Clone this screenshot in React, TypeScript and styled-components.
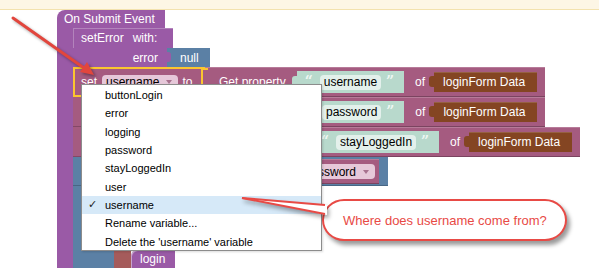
import styled, { createGlobalStyle, css } from 'styled-components';

// block colours
const PURPLE = '#9a5aa6';
const MAUVE = '#a55b80';
const BLUE = '#5b80a5';
const TEAL = '#b8d9cc';
const BROWN = '#844522';
const RED_BLOCK = '#a55b5b';
const YELLOW = '#fbc62f';
const CALLOUT = '#e84a45';

const GlobalStyle = createGlobalStyle`
	html, body {
		margin: 0;
		padding: 0;
		background: #fff;
	}
	body {
		font-family: "Liberation Sans", Arial, sans-serif;
	}
`;

// output tab on the left side of a value block
const tab = (color: string, top: number) => css`
	&::before {
		content: '';
		position: absolute;
		left: -5px;
		top: ${top}px;
		width: 5px;
		height: 11px;
		background: ${color};
		border-radius: 3px 0 0 3px;
	}
`;

const Page = styled.div`
	position: relative;
	width: 599px;
	height: 268px;
	overflow: hidden;
	background: #fff;
`;

const TopBar = styled.div`
	height: 9px;
	background: #fdf6e5;
	border-bottom: 1px solid #f3e2ae;
`;

const Workspace = styled.div`
	display: flex;
	padding-left: 57px;
`;

const EventBlock = styled.div`
	display: flex;
	flex-direction: column;
`;

const EventHeader = styled.div`
	width: 108px;
	height: 18px;
	box-sizing: border-box;
	padding: 2px 0 0 7px;
	background: ${PURPLE};
	border-top-left-radius: 8px;
	color: #fff;
	font-size: 12px;
	line-height: 14px;
	white-space: nowrap;
`;

const EventBody = styled.div`
	display: flex;
`;

const EventArm = styled.div`
	width: 16px;
	background: ${PURPLE};
`;

const Stack = styled.div`
	display: flex;
	flex-direction: column;
`;

const Label = styled.span<{ $ml?: number }>`
	margin-left: ${(p) => p.$ml ?? 0}px;
	color: #fff;
	font-size: 12px;
	white-space: nowrap;
`;

// stands in for a label that lies under the context menu
const Spacer = styled.span<{ $w: number }>`
	width: ${(p) => p.$w}px;
	flex-shrink: 0;
`;

const SetErrorBlock = styled.div`
	display: flex;
	flex-direction: column;
`;

const SetErrorHead = styled.div`
	width: 100px;
	height: 20px;
	box-sizing: border-box;
	padding-left: 8px;
	display: flex;
	align-items: center;
	gap: 9px;
	background: ${PURPLE};
	box-shadow: inset 1px 1px 0 rgba(255, 255, 255, 0.25);
`;

const SetErrorInput = styled.div`
	display: flex;
	height: 19px;
`;

const ErrorLabel = styled.div`
	width: 94px;
	box-sizing: border-box;
	padding-right: 9px;
	display: flex;
	align-items: center;
	justify-content: flex-end;
	background: ${PURPLE};
	color: #fff;
	font-size: 12px;
`;

const NullBlock = styled.div`
	position: relative;
	width: 43px;
	box-sizing: border-box;
	padding-left: 13px;
	display: flex;
	align-items: center;
	background: ${BLUE};
	color: #fff;
	font-size: 12px;
	&::before {
		content: '';
		position: absolute;
		left: 0;
		top: 4px;
		width: 4px;
		height: 10px;
		background: ${PURPLE};
		border-radius: 0 3px 3px 0;
	}
`;

const StatementRow = styled.div<{ $h: number }>`
	display: flex;
	height: ${(p) => p.$h}px;
`;

const SetBlock = styled.div<{ $w: number; $selected?: boolean }>`
	position: relative;
	width: ${(p) => p.$w}px;
	box-sizing: border-box;
	padding-left: 8px;
	display: flex;
	align-items: center;
	background: ${MAUVE};
	box-shadow: inset 0 -1px 0 rgba(0, 0, 0, 0.2);
	${(p) =>
		p.$selected &&
		css`
			padding-left: 6px;
			border: 2px solid ${YELLOW};
			border-right: none;
			box-shadow: none;
			&::after {
				content: '';
				position: absolute;
				right: -3px;
				top: -1px;
				width: 5px;
				height: 14px;
				border: 2px solid ${YELLOW};
				border-right: none;
				border-bottom: none;
			}
		`}
`;

const Dropdown = styled.span<{ $ml?: number }>`
	display: inline-flex;
	align-items: center;
	height: 15px;
	margin-left: ${(p) => p.$ml ?? 0}px;
	padding: 0 6px 0 4px;
	border-radius: 4px;
	background: #e6c8d9;
	color: #000;
	font-size: 12px;
	white-space: nowrap;
`;

const DropArrow = styled.span`
	margin-left: 7px;
	width: 0;
	height: 0;
	border-left: 3px solid transparent;
	border-right: 3px solid transparent;
	border-top: 4px solid #a8728f;
`;

const GetProperty = styled.div`
	display: flex;
	align-items: center;
	padding: 0 8px 0 14px;
	background: ${MAUVE};
	box-shadow: inset 0 1px 0 rgba(255, 255, 255, 0.2), inset 0 -1px 0 rgba(0, 0, 0, 0.25);
`;

const StringBlock = styled.div`
	position: relative;
	height: 22px;
	margin-left: 11px;
	padding: 0 8px;
	display: flex;
	align-items: center;
	background: ${TEAL};
	${tab(TEAL, 5)}
`;

const Quote = styled.span<{ $side: 'left' | 'right' }>`
	width: 15px;
	box-sizing: border-box;
	padding-left: ${(p) => (p.$side === 'right' ? 5 : 0)}px;
	color: #eef7f3;
	font-family: "DejaVu Serif", serif;
	font-weight: bold;
	font-size: 14px;
	line-height: 14px;
	margin-top: -3px;
`;

const TextField = styled.span`
	height: 15px;
	padding: 0 4px;
	display: inline-flex;
	align-items: center;
	border-radius: 4px;
	background: #e3f0eb;
	color: #000;
	font-size: 12px;
	white-space: nowrap;
`;

const DataBlock = styled.div`
	position: relative;
	width: 103px;
	height: 20px;
	box-sizing: border-box;
	margin-left: 9px;
	padding-left: 9px;
	display: flex;
	align-items: center;
	background: ${BROWN};
	box-shadow: inset 0 1px 0 rgba(255, 255, 255, 0.15);
	color: #fff;
	font-size: 12px;
	white-space: nowrap;
	${tab(BROWN, 4)}
`;

const IfBlock = styled.div`
	display: flex;
	flex-direction: column;
`;

const IfHead = styled.div`
	width: 315px;
	height: 29px;
	box-sizing: border-box;
	padding: 0 9px 0 8px;
	display: flex;
	align-items: center;
	justify-content: flex-end;
	background: ${BLUE};
	box-shadow: inset 0 -1px 0 rgba(0, 0, 0, 0.2);
`;

const VarGetter = styled.div`
	position: relative;
	height: 25px;
	padding: 0 4px 0 5px;
	display: flex;
	align-items: center;
	background: ${MAUVE};
	box-shadow: inset 0 1px 0 rgba(255, 255, 255, 0.2), inset 0 -1px 0 rgba(0, 0, 0, 0.25);
	${tab(MAUVE, 6)}
`;

const IfBody = styled.div`
	display: flex;
`;

const IfArm = styled.div`
	width: 41px;
	background: ${BLUE};
`;

const CallBlock = styled.div`
	display: flex;
	flex-direction: column;
`;

const CallHead = styled.div`
	width: 180px;
	height: 64px;
	background: ${RED_BLOCK};
`;

const CallBody = styled.div`
	display: flex;
`;

const CallArm = styled.div`
	width: 17px;
	background: ${RED_BLOCK};
`;

const LoginBlock = styled.div`
	width: 44px;
	height: 22px;
	box-sizing: border-box;
	padding: 3px 0 0 9px;
	background: ${PURPLE};
	border-top-left-radius: 6px;
	box-shadow: inset 1px 1px 0 rgba(255, 255, 255, 0.45);
	color: #fff;
	font-size: 12px;
	line-height: 13px;
`;

// context menu over the workspace
const Menu = styled.div`
	position: absolute;
	left: 81px;
	top: 84px;
	width: 241px;
	height: 167px;
	box-sizing: border-box;
	padding-top: 1px;
	background: #fff;
	border: 1px solid #8c8c8c;
	box-shadow: 1px 1px 2px rgba(0, 0, 0, 0.15);
	z-index: 2;
`;

const MenuItem = styled.div<{ $active?: boolean }>`
	position: relative;
	height: 18.3px;
	box-sizing: border-box;
	padding-left: 23px;
	display: flex;
	align-items: center;
	background: ${(p) => (p.$active ? '#d6e9f8' : 'transparent')};
	color: #000;
	font-size: 11px;
	white-space: nowrap;
`;

const Check = styled.span`
	position: absolute;
	left: 6px;
	top: 2px;
	font-family: "DejaVu Sans", sans-serif;
	font-size: 11px;
	color: #222;
`;

const Bubble = styled.div`
	position: absolute;
	left: 322px;
	top: 199px;
	width: 245px;
	height: 42px;
	box-sizing: border-box;
	padding-left: 19px;
	display: flex;
	align-items: center;
	background: #fff;
	border: 2px solid ${CALLOUT};
	border-radius: 22px / 21px;
	box-shadow: 3px 4px 4px rgba(0, 0, 0, 0.4);
	color: ${CALLOUT};
	font-size: 13px;
	white-space: nowrap;
	z-index: 3;
`;

const Overlay = styled.svg<{ $z: number }>`
	position: absolute;
	left: 0;
	top: 0;
	z-index: ${(p) => p.$z};
	pointer-events: none;
`;

type RowProps = {
	variable: string;
	setWidth: number;
	selected?: boolean;
	covered?: boolean;
	quoteCovered?: boolean;
};

const rows: RowProps[] = [
	{ variable: 'username', setWidth: 132, selected: true },
	{ variable: 'password', setWidth: 134, covered: true, quoteCovered: true },
	{ variable: 'stayLoggedIn', setWidth: 148, covered: true },
];

const menuItems = [
	'buttonLogin',
	'error',
	'logging',
	'password',
	'stayLoggedIn',
	'user',
	'username',
	'Rename variable...',
	"Delete the 'username' variable",
];

function PropertyRow(props: RowProps) {
	return (
		<StatementRow $h={30}>
			<SetBlock $w={props.setWidth} $selected={props.selected}>
				{!props.covered && (
					<>
						<Label>set</Label>
						<Dropdown $ml={5}>
							{props.variable}
							<DropArrow />
						</Dropdown>
						<Label $ml={4}>to</Label>
					</>
				)}
			</SetBlock>
			<GetProperty>
				{props.covered ? <Spacer $w={67} /> : <Label>Get property</Label>}
				<StringBlock>
					<Quote $side="left">{props.quoteCovered ? '' : '“'}</Quote>
					<TextField>{props.variable}</TextField>
					<Quote $side="right">”</Quote>
				</StringBlock>
				<Label $ml={11}>of</Label>
				<DataBlock>loginForm Data</DataBlock>
			</GetProperty>
		</StatementRow>
	);
}

function VariableMenu() {
	return (
		<Menu>
			{menuItems.map((item) => (
				<MenuItem key={item} $active={item === 'username'}>
					{item === 'username' && <Check>✓</Check>}
					{item}
				</MenuItem>
			))}
		</Menu>
	);
}

export default function App() {
	return (
		<>
			<GlobalStyle />
			<Page>
				<TopBar />
				<Workspace>
					<EventBlock>
						<EventHeader>On Submit Event</EventHeader>
						<EventBody>
							<EventArm />
							<Stack>
								<SetErrorBlock>
									<SetErrorHead>
										<Label>setError</Label>
										<Label>with:</Label>
									</SetErrorHead>
									<SetErrorInput>
										<ErrorLabel>error</ErrorLabel>
										<NullBlock>null</NullBlock>
									</SetErrorInput>
								</SetErrorBlock>

								{rows.map((row) => (
									<PropertyRow key={row.variable} {...row} />
								))}

								<IfBlock>
									<IfHead>
										<VarGetter>
											<Dropdown>
												password
												<DropArrow />
											</Dropdown>
										</VarGetter>
									</IfHead>
									<IfBody>
										<IfArm />
										<CallBlock>
											<CallHead />
											<CallBody>
												<CallArm />
												<LoginBlock>login</LoginBlock>
											</CallBody>
										</CallBlock>
									</IfBody>
								</IfBlock>
							</Stack>
						</EventBody>
					</EventBlock>
				</Workspace>

				<VariableMenu />
				<Bubble>Where does username come from?</Bubble>

				{/* red arrow pointing at the set block */}
				<Overlay $z={4} width="599" height="268" viewBox="0 0 599 268">
					<g style={{ filter: 'drop-shadow(2px 2px 1.5px rgba(0,0,0,0.35))' }}>
						<line x1="13" y1="18" x2="84" y2="68" stroke="#e2463d" strokeWidth="3" strokeLinecap="round" />
						<polygon points="94,75 80,72 87,62" fill="#e2463d" />
					</g>
				</Overlay>

				{/* callout tail */}
				<Overlay $z={5} width="599" height="268" viewBox="0 0 599 268">
					<g style={{ filter: 'drop-shadow(2px 3px 2px rgba(0,0,0,0.35))' }}>
						<polygon points="242,198 327,205 327,215" fill="#fff" />
						<line x1="242" y1="198" x2="325" y2="205" stroke={CALLOUT} strokeWidth="2" />
						<line x1="242" y1="198" x2="325" y2="214" stroke={CALLOUT} strokeWidth="2" />
					</g>
				</Overlay>
			</Page>
		</>
	);
}
